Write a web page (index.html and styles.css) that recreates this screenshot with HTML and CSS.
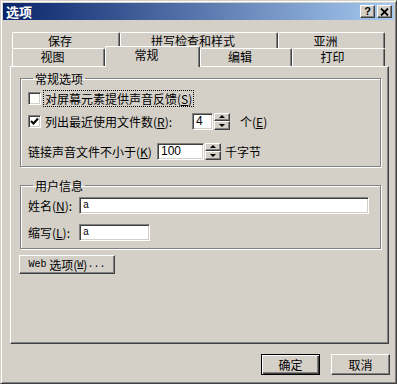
FILE: index.html
```html
<!DOCTYPE html>
<html lang="zh">
<head>
<meta charset="UTF-8">
<title>选项</title>
<link rel="stylesheet" href="styles.css">
</head>
<body>

<div class="window">
    <div class="titlebar">
        <span class="title">选项</span>
        <div class="title-btns">
            <span class="tbtn">?</span>
            <span class="tbtn">
                <svg width="9" height="8" viewBox="0 0 9 8"><path d="M1 0.5 L8 7.5 M8 0.5 L1 7.5" stroke="#000" stroke-width="1.8"/></svg>
            </span>
        </div>
    </div>

    <div class="tabs">
        <div class="tabrow back">
            <div class="tab t-save">保存</div>
            <div class="tab t-spell">拼写检查和样式</div>
            <div class="tab t-asia">亚洲</div>
        </div>
        <div class="tabrow front">
            <div class="tab t-view">视图</div>
            <div class="tab t-general selected">常规</div>
            <div class="tab t-edit">编辑</div>
            <div class="tab t-print">打印</div>
        </div>
    </div>

    <div class="panel">
        <fieldset class="group general">
            <legend>常规选项</legend>
            <div class="row">
                <span class="check"></span>
                <span class="focus">对屏幕元素提供声音反馈(<u>S</u>)</span>
            </div>
            <div class="row row-recent">
                <span class="check">
                    <svg width="11" height="11" viewBox="0 0 11 11"><path d="M2 5 L4.5 7.5 L9 2.5" fill="none" stroke="#000" stroke-width="2"/></svg>
                </span>
                <span class="label-recent">列出最近使用文件数(<u>R</u>):</span>
                <span class="field f-recent">4</span>
                <span class="spin"><span class="up"></span><span class="down"></span></span>
                <span class="unit unit-recent">个(<u>E</u>)</span>
            </div>
            <div class="row row-sound">
                <span class="label-sound">链接声音文件不小于(<u>K</u>)</span>
                <span class="field f-sound">100</span>
                <span class="spin"><span class="up"></span><span class="down"></span></span>
                <span class="unit">千字节</span>
            </div>
        </fieldset>

        <fieldset class="group user">
            <legend>用户信息</legend>
            <div class="row">
                <span class="label-user">姓名(<u>N</u>):</span>
                <span class="field mono f-name">a</span>
            </div>
            <div class="row row-initials">
                <span class="label-user">缩写(<u>L</u>):</span>
                <span class="field mono f-initials">a</span>
            </div>
        </fieldset>

        <div class="btn web-btn"><span class="mono">Web</span>&nbsp;选项(<span class="mono"><u>W</u></span>)<span class="mono">...</span></div>
    </div>

    <div class="footer">
        <div class="btn default">确定</div>
        <div class="btn">取消</div>
    </div>
</div>

</body>
</html>
```

FILE: styles.css
```css
body {
    margin: 0;
    font-family: "Noto Sans CJK SC", sans-serif;
    font-size: 12px;
    color: #000;
    background: #d4d0c8;
}
.window {
    width: 397px;
    height: 384px;
    box-sizing: border-box;
    padding: 2px;
    background: #d4d0c8;
    border: 1px solid;
    border-color: #d4d0c8 #404040 #404040 #d4d0c8;
    box-shadow: inset 1px 1px 0 #fff, inset -1px -1px 0 #808080;
}
.titlebar {
    height: 17px;
    display: flex;
    align-items: center;
    justify-content: space-between;
    padding: 0 2px 0 3px;
    background: linear-gradient(to right, #0a246a, #a6caf0);
}
.title {
    color: #fff;
    font-weight: bold;
    font-size: 13px;
    line-height: 17px;
}
.title-btns {
    display: flex;
    gap: 2px;
}
.tbtn {
    width: 15px;
    height: 13px;
    box-sizing: border-box;
    display: flex;
    align-items: center;
    justify-content: center;
    background: #d4d0c8;
    border: 1px solid;
    border-color: #fff #404040 #404040 #fff;
    box-shadow: inset -1px -1px 0 #808080;
    font-family: "Liberation Sans", sans-serif;
    font-weight: bold;
    font-size: 11px;
    line-height: 11px;
}

/* tabs */
.tabs {
    margin: 12px 5px 0 9px;
}
.tabrow {
    display: flex;
}
.tabrow.back {
    height: 16px;
}
.tabrow.front {
    height: 18px;
    align-items: flex-end;
}
.tab {
    box-sizing: border-box;
    height: 100%;
    padding-right: 12px;
    text-align: center;
    line-height: 15px;
    background: #d4d0c8;
    border-top: 1px solid #fff;
    border-left: 1px solid #fff;
    border-right: 1px solid #404040;
    border-radius: 2px 2px 0 0;
    box-shadow: inset -1px 0 0 #808080;
}
.tabrow.front .tab {
    line-height: 16px;
}
.tab.selected {
    position: relative;
    z-index: 1;
    height: 21px;
    margin-bottom: -1px;
    line-height: 17px;
}
.t-save { width: 108px; }
.t-spell { width: 158px; }
.t-asia { width: 107px; }
.t-view { width: 93px; }
.t-general { width: 95px; }
.t-edit { width: 92px; }
.t-print { width: 93px; }

/* panel */
.panel {
    margin: 0 5px 0 7px;
    height: 278px;
    box-sizing: border-box;
    padding: 4px 7px 0 8px;
    border: 1px solid;
    border-color: #fff #404040 #404040 #fff;
    box-shadow: inset -1px -1px 0 #808080;
}
.group {
    margin: 0 0 0 1px;
    padding: 2px 7px 5px 7px;
    border: 1px solid #808080;
    box-shadow: inset 1px 1px 0 #fff, 1px 1px 0 #fff;
    min-inline-size: 0;
}
.group legend {
    padding: 0 2px;
    margin-left: 5px;
    line-height: 15px;
}
.group.user {
    margin-top: 11px;
    padding-bottom: 6px;
}
.row {
    height: 20px;
    display: flex;
    align-items: center;
    white-space: nowrap;
}
.row-recent {
    margin-top: 3px;
}
.row-sound {
    margin-top: 10px;
}
.row-initials {
    margin-top: 7px;
}
u {
    text-decoration: underline;
}
.check {
    width: 13px;
    height: 13px;
    box-sizing: border-box;
    display: flex;
    align-items: center;
    justify-content: center;
    margin-right: 4px;
    background: #fff;
    border: 1px solid;
    border-color: #808080 #fff #fff #808080;
    box-shadow: inset 1px 1px 0 #404040, inset -1px -1px 0 #d4d0c8;
}
.focus {
    outline: 1px dotted #000;
    outline-offset: 0;
    padding: 0 1px;
    margin-left: -1px;
    line-height: 15px;
}
.label-recent { width: 147px; }
.label-sound { width: 129px; }
.label-user { width: 51px; }
.field {
    height: 17px;
    box-sizing: border-box;
    padding: 0 3px;
    background: #fff;
    border: 1px solid;
    border-color: #808080 #fff #fff #808080;
    box-shadow: inset 1px 1px 0 #404040, inset -1px -1px 0 #d4d0c8;
    font-family: "Liberation Sans", sans-serif;
    font-size: 12px;
    line-height: 15px;
}
.mono {
    font-family: "Liberation Mono", monospace;
    font-size: 10px;
}
.field.mono {
    line-height: 15px;
}
.f-recent { width: 21px; }
.f-sound { width: 47px; }
.f-name { width: 290px; height: 17px; }
.f-initials { width: 71px; }
.spin {
    width: 16px;
    height: 17px;
    margin-left: 1px;
    display: flex;
    flex-direction: column;
}
.spin span {
    flex: 1;
    box-sizing: border-box;
    display: flex;
    align-items: center;
    justify-content: center;
    border: 1px solid;
    border-color: #fff #404040 #404040 #fff;
    box-shadow: inset -1px -1px 0 #808080;
}
.spin .up::after {
    content: "";
    border: 3px solid transparent;
    border-bottom: 3px solid #000;
    border-top-width: 0;
}
.spin .down::after {
    content: "";
    border: 3px solid transparent;
    border-top: 3px solid #000;
    border-bottom-width: 0;
}
.unit {
    margin-left: 4px;
}
.unit-recent {
    margin-left: 10px;
}

/* buttons */
.btn {
    box-sizing: border-box;
    display: flex;
    align-items: center;
    justify-content: center;
    background: #d4d0c8;
    border: 1px solid;
    border-color: #fff #404040 #404040 #fff;
    box-shadow: inset -1px -1px 0 #808080;
    white-space: nowrap;
}
.web-btn {
    width: 96px;
    height: 19px;
    margin-top: 6px;
    margin-left: 0;
}
.footer {
    display: flex;
    justify-content: flex-end;
    gap: 11px;
    padding: 10px 4px 0 0;
}
.footer .btn {
    width: 59px;
    height: 21px;
}
.footer .btn.default {
    border-color: #000;
    box-shadow: inset 1px 1px 0 #fff, inset -1px -1px 0 #404040, inset -2px -2px 0 #808080;
}
```
